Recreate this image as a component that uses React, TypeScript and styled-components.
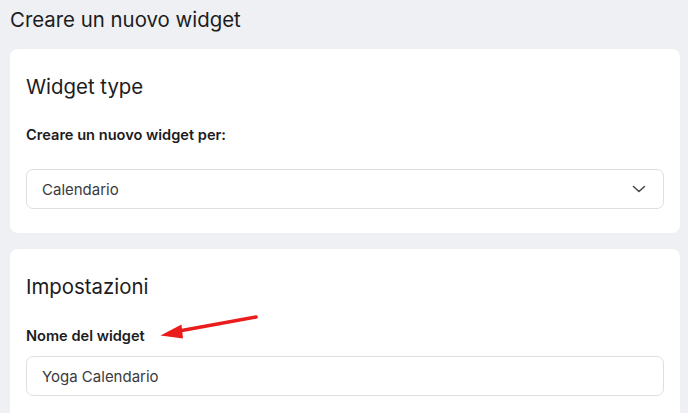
import React from 'react';
import styled, { createGlobalStyle } from 'styled-components';

const GlobalStyle = createGlobalStyle`
    html, body {
        margin: 0;
        padding: 0;
        background: #eef0f4;
        font-family: Inter, "Open Sans", sans-serif;
        color: #1c1c1e;
    }
`;

const Page = styled.div`
    width: 688px;
    height: 413px;
    overflow: hidden;
    box-sizing: border-box;
    padding: 7px 8px 0 10px;
    display: flex;
    flex-direction: column;
`;

const PageTitle = styled.h1`
    margin: 0 0 16px 0;
    font-size: 20.4px;
    line-height: 26px;
    font-weight: 400;
    color: #1c1c1e;
`;

const Card = styled.section`
    position: relative;
    background: #ffffff;
    border-radius: 8px;
    padding: 24px 16px 24px 16px;
    margin-bottom: 16px;
    display: flex;
    flex-direction: column;
    flex-shrink: 0;
`;

const CardTitle = styled.h2`
    margin: 0;
    font-size: 20.4px;
    line-height: 27px;
    font-weight: 400;
    color: #1c1c1e;
`;

const FieldLabel = styled.label<{ $top: number; $bottom: number }>`
    display: block;
    margin: ${p => p.$top}px 0 ${p => p.$bottom}px 0;
    font-size: 14.6px;
    line-height: 17px;
    font-weight: 600;
    color: #1c1c1e;
`;

const FieldBox = styled.div`
    height: 40px;
    box-sizing: border-box;
    border: 1px solid #dedfe3;
    border-radius: 7px;
    padding: 0 15px;
    display: flex;
    align-items: center;
    justify-content: space-between;
    font-size: 15px;
    color: #3a3a3c;
`;

const Chevron = styled.svg`
    margin-right: 2px;
`;

const Annotation = styled.svg`
    position: absolute;
    left: 140px;
    top: 57px;
`;

function App() {
    return (
        <>
            <GlobalStyle />
            <Page>
                <PageTitle>Creare un nuovo widget</PageTitle>
                <Card>
                    <CardTitle>Widget type</CardTitle>
                    <FieldLabel $top={27} $bottom={25}>Creare un nuovo widget per:</FieldLabel>
                    <FieldBox>
                        Calendario
                        <Chevron width="14" height="8" viewBox="0 0 14 8">
                            <polyline
                                points="1.5,1.5 7,6.5 12.5,1.5"
                                fill="none"
                                stroke="#4a4a4c"
                                strokeWidth="1.6"
                                strokeLinecap="round"
                                strokeLinejoin="round"
                            />
                        </Chevron>
                    </FieldBox>
                </Card>
                <Card>
                    <CardTitle>Impostazioni</CardTitle>
                    <FieldLabel $top={28} $bottom={11}>Nome del widget</FieldLabel>
                    <FieldBox>Yoga Calendario</FieldBox>
                    <Annotation width="120" height="45" viewBox="0 0 120 45">
                        <line x1="29" y1="25" x2="106" y2="11" stroke="#ea1c1c" strokeWidth="3.5" strokeLinecap="round" />
                        <polygon points="10.5,29.5 31.5,18.5 33,32.5" fill="#ea1c1c" />
                    </Annotation>
                </Card>
            </Page>
        </>
    );
}

export default App;
